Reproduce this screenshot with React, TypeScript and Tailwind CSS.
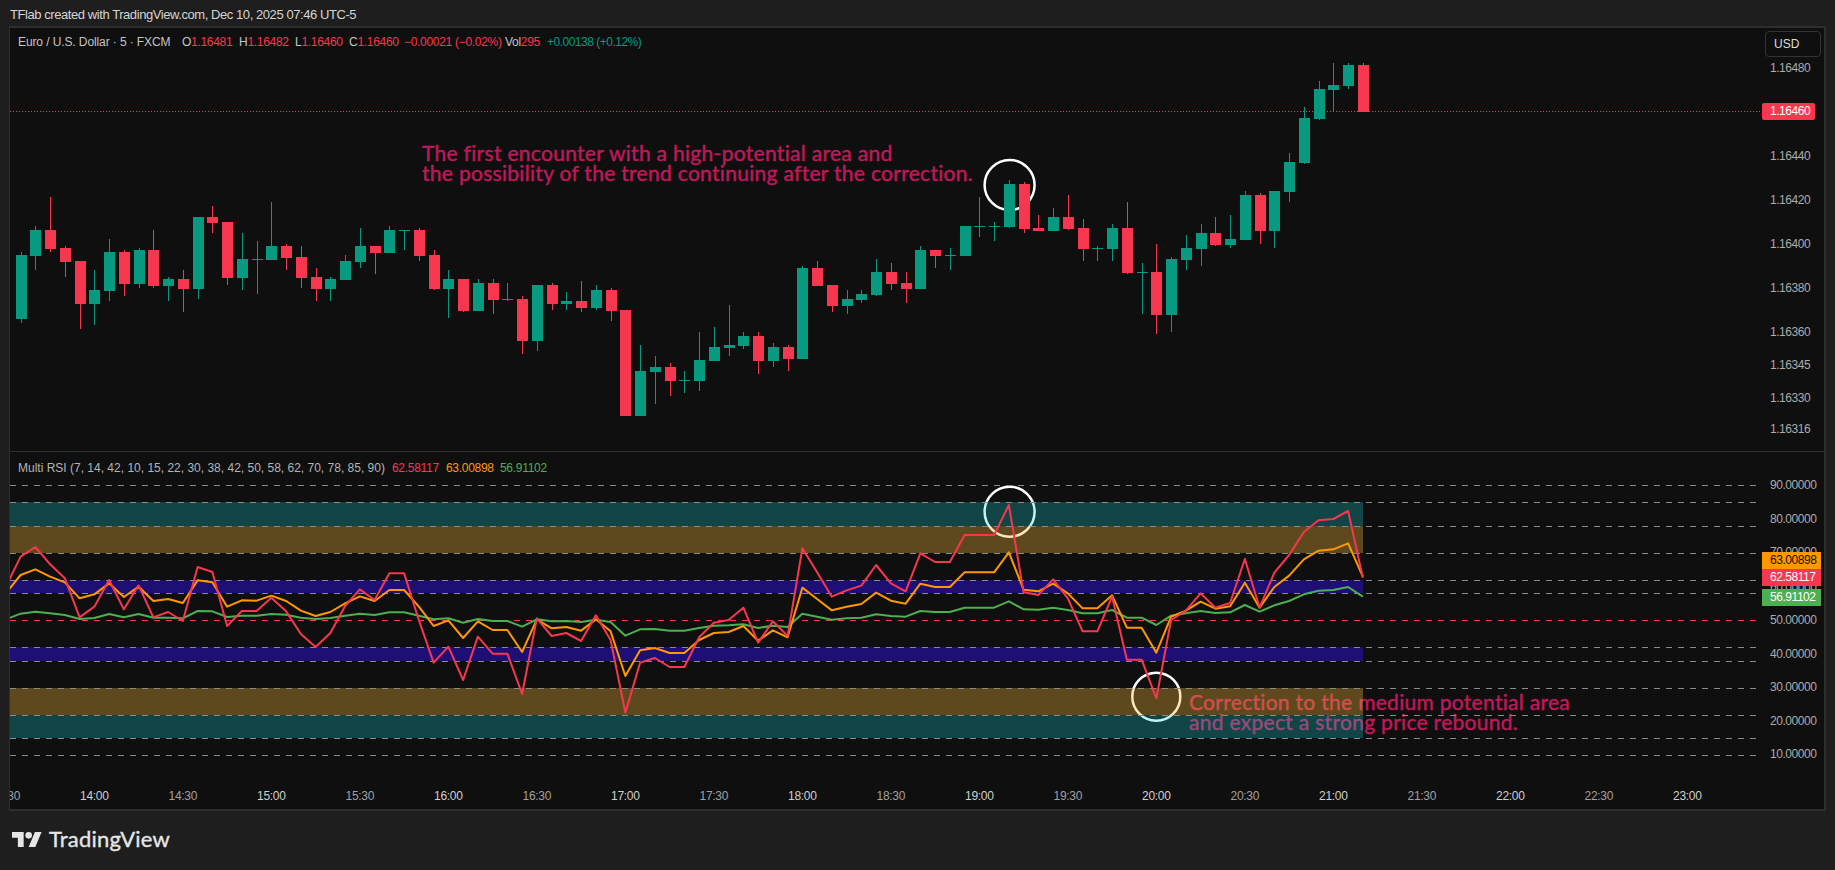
import React from 'react';

const UP = '#089981';
const DOWN = '#f7374f';
const barX = (i: number) => Math.round(20.6 + 14.75 * i);

// color, high, body top, body bottom, low (page pixels)
type Bar = [0 | 1, number, number, number, number];
const bars: Bar[] = [
  [1, 318, 318, 318, 341],
  [1, 252, 255, 319, 323], [1, 226, 230, 256, 270], [0, 197, 230, 249, 252], [0, 246, 248, 262, 277],
  [0, 261, 261, 304, 329], [1, 270, 290, 304, 325], [1, 239, 252, 291, 301], [0, 250, 252, 284, 296],
  [1, 248, 250, 284, 288], [0, 230, 250, 286, 288], [1, 277, 279, 286, 301], [0, 270, 279, 289, 312],
  [1, 217, 217, 289, 299], [0, 206, 217, 223, 233], [0, 222, 222, 278, 285], [1, 233, 259, 278, 290],
  [1, 241, 259, 260, 294], [1, 202, 246, 260, 260], [0, 244, 246, 258, 270], [0, 246, 257, 278, 288],
  [0, 268, 277, 289, 301], [1, 277, 279, 289, 301], [1, 255, 261, 280, 280], [1, 228, 246, 262, 268],
  [0, 246, 246, 253, 274], [1, 226, 230, 253, 253], [1, 230, 230, 231, 250], [0, 228, 230, 256, 261],
  [0, 250, 255, 289, 290], [1, 270, 279, 289, 318], [0, 279, 279, 311, 312], [1, 279, 283, 311, 311],
  [0, 279, 283, 300, 314], [1, 283, 299, 300, 301], [0, 296, 299, 341, 354], [1, 285, 285, 341, 351],
  [0, 283, 285, 304, 310], [1, 292, 301, 304, 310], [0, 281, 301, 308, 312], [1, 285, 290, 308, 310],
  [0, 288, 290, 311, 321], [0, 310, 310, 416, 416], [1, 345, 371, 416, 416], [1, 356, 367, 372, 404],
  [0, 363, 367, 381, 396], [1, 371, 380, 381, 393], [1, 332, 360, 381, 391], [1, 327, 347, 361, 361],
  [1, 305, 345, 348, 356], [1, 332, 336, 346, 349], [0, 332, 336, 361, 374], [1, 343, 347, 361, 367],
  [0, 345, 347, 359, 371], [1, 266, 268, 359, 359], [0, 261, 268, 286, 286], [0, 285, 285, 306, 312],
  [1, 290, 299, 306, 314], [1, 290, 294, 300, 303], [1, 259, 272, 295, 296], [0, 263, 272, 284, 290],
  [0, 272, 283, 289, 303], [1, 246, 250, 289, 289], [0, 250, 250, 256, 268], [1, 248, 255, 256, 270],
  [1, 226, 226, 256, 256], [1, 197, 226, 227, 237], [1, 222, 226, 227, 241], [1, 180, 184, 227, 228],
  [0, 182, 184, 229, 233], [0, 215, 228, 231, 231], [1, 208, 217, 231, 231], [0, 195, 217, 229, 230],
  [0, 219, 228, 249, 261], [1, 246, 248, 249, 261], [1, 224, 228, 249, 261], [0, 202, 228, 273, 274],
  [1, 263, 272, 273, 314], [0, 244, 272, 315, 334], [1, 257, 259, 315, 332], [1, 235, 248, 260, 270],
  [1, 224, 233, 249, 266], [0, 217, 233, 245, 246], [1, 215, 239, 245, 248], [1, 191, 195, 240, 240],
  [0, 193, 195, 231, 244], [1, 191, 191, 231, 248], [1, 153, 162, 192, 202], [1, 107, 118, 163, 164],
  [1, 81, 89, 119, 120], [1, 63, 85, 90, 111], [1, 63, 65, 86, 89], [0, 63, 65, 112, 112],
];

// rsi values, read as offsets, starting from bar -1
const rsiY = (v: number) => 450 + v / 3;
const rsiRed = [410, 320, 291, 343, 385, 502, 470, 390, 478, 406, 502, 486, 513, 351, 366, 528, 483, 483, 443, 484, 552, 591, 549, 468, 418, 450, 370, 370, 510, 638, 590, 690, 560, 611, 611, 732, 505, 558, 549, 573, 496, 570, 788, 638, 624, 651, 651, 562, 518, 510, 473, 578, 514, 558, 295, 367, 440, 421, 407, 345, 400, 424, 310, 336, 336, 255, 255, 255, 165, 427, 435, 388, 445, 544, 544, 440, 629, 629, 745, 510, 482, 430, 473, 459, 327, 473, 368, 315, 246, 211, 207, 183, 383];
const rsiOrange = [430, 375, 358, 380, 397, 445, 433, 400, 441, 410, 453, 447, 459, 391, 397, 470, 451, 452, 437, 453, 482, 498, 486, 460, 439, 453, 420, 420, 470, 528, 511, 564, 514, 540, 540, 606, 508, 535, 531, 542, 508, 544, 678, 601, 594, 609, 609, 570, 549, 546, 528, 572, 541, 562, 413, 447, 481, 470, 462, 428, 452, 461, 401, 411, 411, 367, 367, 367, 307, 419, 424, 401, 430, 475, 475, 436, 533, 533, 608, 500, 482, 455, 476, 469, 398, 473, 411, 377, 328, 302, 298, 280, 380];
const rsiGreen = [508, 491, 485, 490, 495, 507, 504, 492, 502, 492, 503, 503, 505, 483, 484, 501, 497, 497, 492, 494, 503, 507, 504, 497, 491, 495, 487, 487, 497, 508, 505, 518, 507, 513, 513, 530, 508, 514, 513, 516, 509, 516, 557, 538, 537, 542, 542, 534, 527, 526, 523, 534, 527, 531, 491, 500, 509, 505, 503, 493, 498, 500, 483, 486, 486, 473, 473, 473, 454, 478, 479, 473, 480, 490, 490, 480, 503, 503, 525, 497, 490, 483, 489, 487, 465, 485, 466, 453, 433, 422, 420, 411, 440];

const points = (vals: number[]) => vals.map((v, k) => `${20.6 + 14.75 * (k - 1)},${rsiY(v)}`).join(' ');

const level = (v: number) => 620.3 - (v - 50) * 3.375;
const levels = [90, 85, 78, 70, 62, 58, 42, 38, 30, 22, 15, 10];
const bands: [number, number, string][] = [
  [85, 78, 'rgba(28,212,212,0.28)'],
  [78, 70, 'rgba(241,184,58,0.35)'],
  [62, 58, '#1e0f75'],
  [42, 38, '#1e0f75'],
  [30, 22, 'rgba(241,184,58,0.35)'],
  [22, 15, 'rgba(28,212,212,0.28)'],
];

const priceTicks: [string, number][] = [
  ['1.16480', 67.7], ['1.16440', 155.7], ['1.16420', 199.7], ['1.16400', 243.7], ['1.16380', 287.7],
  ['1.16360', 331.7], ['1.16345', 364.7], ['1.16330', 397.7], ['1.16316', 428.7],
];
const rsiTicks: [string, number][] = [
  ['90.00000', 484.7], ['80.00000', 518.7], ['70.00000', 551.7], ['60.00000', 586.7], ['50.00000', 619.7],
  ['40.00000', 653.7], ['30.00000', 687.3], ['20.00000', 720.7], ['10.00000', 754.3],
];
const times = ['13:30', '14:00', '14:30', '15:00', '15:30', '16:00', '16:30', '17:00', '17:30', '18:00', '18:30', '19:00', '19:30', '20:00', '20:30', '21:00', '21:30', '22:00', '22:30', '23:00'];

const font = "font-['Liberation_Sans',sans-serif]";
const noteFont = "font-['Lato',sans-serif]";

const AxisLabel = ({ text, y, top }: { text: string; y: number; top: number }) => (
  <span className="absolute left-[1760px] -translate-y-1/2 text-[12px] leading-none tracking-[-0.45px] text-[#ababab]" style={{ top: y - top }}>
    {text}
  </span>
);

const Badge = ({ text, top, bg, dark }: { text: string; top: number; bg: string; dark?: boolean }) => (
  <div className={`absolute left-[1752px] h-[17px] w-[59px] pl-[8px] text-[12px] leading-[17px] tracking-[-0.45px] ${dark ? 'text-[#111111]' : 'text-white'}`} style={{ top, background: bg }}>
    {text}
  </div>
);

const TvLogo = () => (
  <svg width="30" height="15" viewBox="0 4 36 18" fill="#e6e6e6">
    <path d="M14 22H7V11H0V4h14v18zM28 22h-8l7.5-18h8L28 22z" />
    <circle cx="20" cy="8" r="4" />
  </svg>
);

export default function App() {
  return (
    <div className={`flex h-[870px] w-[1835px] flex-col overflow-hidden bg-[#1e1e1e] ${font}`}>
      <div className="h-[26px] pl-[10px] pt-[7px] text-[13px] leading-[16px] tracking-[-0.43px] text-[#d4d4d4]">
        TFlab created with TradingView.com, Dec 10, 2025 07:46 UTC-5
      </div>

      <div className="ml-[9px] flex h-[785px] w-[1817px] flex-col border-y-2 border-r-2 border-l border-[#2e2e2e] bg-[#0f0f0f]">
        {/* Price pane */}
        <div className="relative h-[423px] overflow-hidden">
          <svg className="absolute inset-0" width="1814" height="423" viewBox="10 28 1814 423">
            <circle cx="1009.6" cy="185" r="25" fill="none" stroke="#ffffff" strokeWidth="2.5" />
            <line x1="10" x2="1762" y1="111.5" y2="111.5" stroke={DOWN} strokeWidth="1" strokeDasharray="1 2" />
            <g shapeRendering="crispEdges">
              {bars.map(([up, high, top, bottom, low], k) => {
                const x = barX(k - 1);
                const c = up ? UP : DOWN;
                return (
                  <g key={k}>
                    <rect x={x} y={high} width="1" height={low - high} fill={c} />
                    {k > 0 && <rect x={x - 5} y={top} width="11" height={bottom - top} fill={c} />}
                  </g>
                );
              })}
            </g>
          </svg>

          <div className={`absolute left-[412px] top-[115px] text-[21px] leading-[20px] tracking-[0.3px] text-[#c2185b] [-webkit-text-stroke:0.4px_#c2185b] ${noteFont}`}>
            <div>The first encounter with a high-potential area and</div>
            <div>the possibility of the trend continuing after the correction.</div>
          </div>

          <div className="absolute left-[8px] top-[7px] flex text-[12px] leading-[14px] tracking-[-0.3px] text-[#c4c4c4]">
            <span className="w-[164px] tracking-[-0.1px]">Euro / U.S. Dollar · 5 · FXCM</span>
            <span className="w-[57px]">O<span className="text-[#f7374f]">1.16481</span></span>
            <span className="w-[56px]">H<span className="text-[#f7374f]">1.16482</span></span>
            <span className="w-[54px]">L<span className="text-[#f7374f]">1.16460</span></span>
            <span className="w-[55px]">C<span className="text-[#f7374f]">1.16460</span></span>
            <span className="w-[101px] text-[#f7374f]">−0.00021 (−0.02%)</span>
            <span className="w-[42px]">Vol<span className="text-[#f7374f]">295</span></span>
            <span className="tracking-[-0.5px] text-[#089981]">+0.00138 (+0.12%)</span>
          </div>

          <div className="absolute left-[1755px] top-[3px] h-[26px] w-[56px] rounded-[4px] border border-[#333333] pl-[8px] text-[12px] leading-[24px] text-[#dedede]">USD</div>

          {priceTicks.map(([t, y]) => (
            <AxisLabel key={t} text={t} y={y} top={28} />
          ))}
          <div className="absolute left-[1752px] top-[75px] h-[17px] w-[53px] rounded-[2px] bg-[#f7374f] pl-[8px] text-[12px] leading-[17px] tracking-[-0.45px] text-white">1.16460</div>
        </div>

        <div className="h-px shrink-0 bg-[#2e2e2e]" />

        {/* RSI pane */}
        <div className="relative flex-1 overflow-hidden">
          <div className={`absolute left-[1179px] top-[240px] text-[21px] leading-[20px] tracking-[0.3px] text-[#c2185b] [-webkit-text-stroke:0.4px_#c2185b] ${noteFont}`}>
            <div>Correction to the medium potential area</div>
            <div>and expect a strong price rebound.</div>
          </div>

          <svg className="absolute inset-0" width="1814" height="357" viewBox="10 452 1814 357">
            <circle cx="1009.6" cy="511.7" r="25" fill="none" stroke="#ffffff" strokeWidth="2.5" />
            <circle cx="1156.3" cy="696.7" r="24" fill="none" stroke="#ffffff" strokeWidth="2.5" />
            {bands.map(([a, b, c]) => (
              <rect key={a} x="10" width="1353" y={Math.round(level(a))} height={Math.round(level(b)) - Math.round(level(a))} fill={c} />
            ))}
            {levels.map((v) => (
              <line key={v} x1="10" x2="1762" y1={Math.round(level(v)) + 0.5} y2={Math.round(level(v)) + 0.5} stroke="#8a8a8a" strokeWidth="1" strokeDasharray="6 6" />
            ))}
            <line x1="10" x2="1762" y1="620.5" y2="620.5" stroke={DOWN} strokeWidth="1" strokeDasharray="6 6" />
            <polyline points={points(rsiGreen)} fill="none" stroke="#4caf50" strokeWidth="2" strokeLinejoin="round" />
            <polyline points={points(rsiOrange)} fill="none" stroke="#ff9800" strokeWidth="2" strokeLinejoin="round" />
            <polyline points={points(rsiRed)} fill="none" stroke={DOWN} strokeWidth="2" strokeLinejoin="round" />
          </svg>

          <div className="absolute left-[8px] top-[9px] flex text-[12px] leading-[14px] text-[#b4b4b4]">
            <span className="w-[374px]">Multi RSI (7, 14, 42, 10, 15, 22, 30, 38, 42, 50, 58, 62, 70, 78, 85, 90)</span>
            <span className="w-[54px] tracking-[-0.3px] text-[#f7374f]">62.58117</span>
            <span className="w-[54px] tracking-[-0.3px] text-[#ff9800]">63.00898</span>
            <span className="tracking-[-0.3px] text-[#4caf50]">56.91102</span>
          </div>

          {rsiTicks.map(([t, y]) => (
            <AxisLabel key={t} text={t} y={y} top={452} />
          ))}
          <Badge text="63.00898" top={100} bg="#ff9800" dark />
          <Badge text="62.58117" top={117} bg="#f7374f" />
          <Badge text="56.91102" top={137} bg="#4caf50" />

          {times.map((t, k) => (
            <span
              key={t}
              className={`absolute -translate-x-1/2 -translate-y-1/2 text-[12px] leading-none tracking-[-0.3px] ${t.endsWith(':00') ? 'text-[#cfcfcf]' : 'text-[#a0a0a0]'}`}
              style={{ left: 5.8 + 88.5 * k - 10, top: 795.7 - 452 }}
            >
              {t}
            </span>
          ))}
        </div>
      </div>

      <div className="flex flex-1 items-start gap-[7px] pl-[12px] pt-[21px]">
        <TvLogo />
        <span className="-mt-[6px] text-[22px] leading-[26px] tracking-[0.2px] text-[#e6e6e6] [-webkit-text-stroke:0.35px_#e6e6e6]" style={{ fontFamily: 'Lato, sans-serif' }}>TradingView</span>
      </div>
    </div>
  );
}
